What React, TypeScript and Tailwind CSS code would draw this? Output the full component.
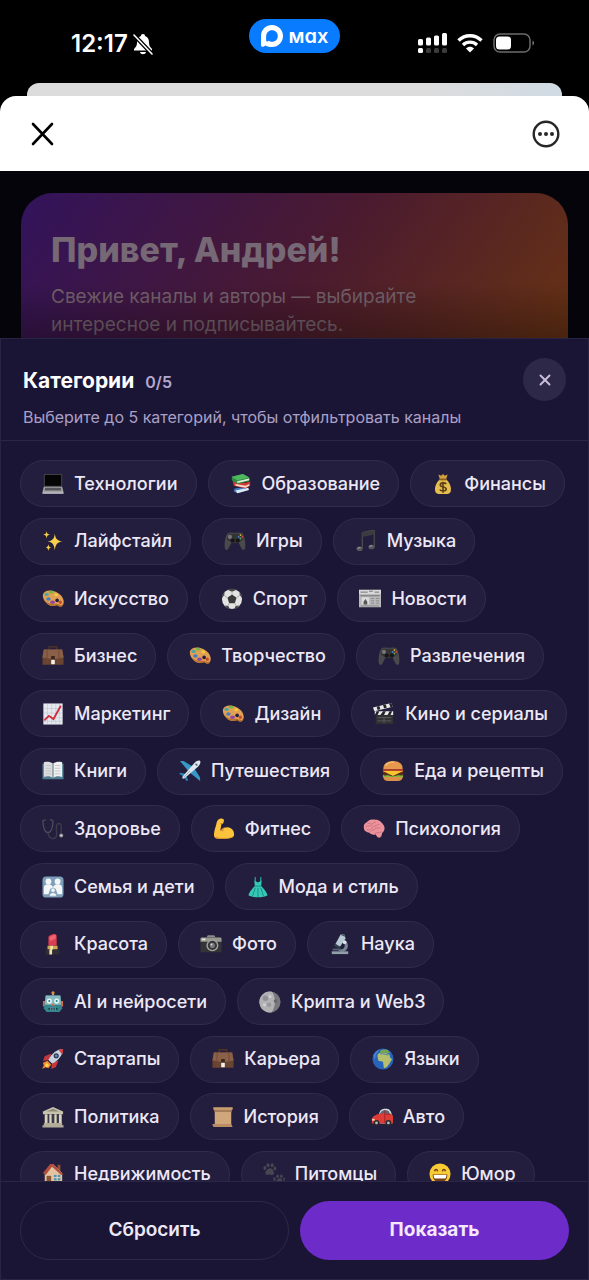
import type { ReactNode } from "react";
import { X } from "lucide-react";

const icons: Record<string, ReactNode> = {
    laptop: (
        <>
            <rect x="2" y="1" width="20" height="14" rx="1" fill="#4b4b50" />
            <rect x="3" y="2" width="18" height="12" fill="#050506" />
            <path d="M2 15h20l1.500 6H.5z" fill="#a3a3a6" />
            <path d="M3.500 16h17l.7 3H2.800z" fill="#56565a" />
            <path d="M.5 21h23v1.600H.5z" fill="#d9d9da" />
        </>
    ),
    books: (
        <>
            <path d="m5 17 13-2 3 3.500-13 3.500-4-2z" fill="#3c78c4" />
            <path d="m6 19 14-3 .5 2.500L8 22z" fill="#dfe9f2" />
            <path d="m3 9 14 2 5-2v5l-5 3-13-3z" fill="#d23830" />
            <path d="m6 12 11 2 4-2v2l-4 2-11-2z" fill="#f3d9cd" />
            <path d="m2 4 12-3 7 4v4l-13 3-6-4z" fill="#2f8f45" />
            <path d="m2 4 12-3 7 4-13 3z" fill="#4fb85e" />
            <path d="m8 9 13-3v2L8 11z" fill="#e4efdc" />
        </>
    ),
    money: (
        <>
            <path d="M7 1.500 10 3l2-2 2 2 3-1.500-1.500 5h-7z" fill="#d3a23c" />
            <path d="M8.500 7C5 10 2.500 15 3.500 19.500 4 22.500 7 23 12 23s8-.5 8.500-3.500C21.500 15 19 10 15.500 7z" fill="#e6bd4f" />
            <path d="M8 6h8v2H8z" fill="#8a6120" />
            <path d="M15.500 12c-1-1.500-6.500-2-6.500 1s6.500 1.500 6.500 4.500-6 2.500-7 .5M12 9.500v12" fill="none" stroke="#5b4017" strokeWidth="1.800" />
        </>
    ),
    sparkles: (
        <g fill="#f8cf4b">
            <path d="M14 4c1 6 2.500 7.500 8.500 8.500C16.500 13.500 15 15 14 22c-1-7-2.500-8.500-8-9.500 5.500-1 7-2.500 8-8.500z" />
            <path d="M5 1c.5 3 1.200 3.500 4 4-2.800.5-3.500 1.200-4 4.500C4.500 6.200 3.800 5.500 1 5c2.800-.5 3.500-1 4-4zM7 15.500c.4 2.300 1 3 3 3.500-2 .4-2.600 1-3 4-.4-3-1-3.600-3-4 2-.5 2.600-1.200 3-3.500z" />
        </g>
    ),
    gamepad: (
        <>
            <path d="M4 3.500C6 2 9 3 12 3s6-1 8 .5c2.500 3 4 11 3 16.500-.6 2.500-3 2-4 0l-3-6H8l-3 6c-1 2-3.400 2.500-4 0C0 14.500 1.500 6.500 4 3.500z" fill="#4a4a4c" />
            <path d="M5 4h14l2 6-5 4H8l-5-4z" fill="#343437" />
            <circle cx="6.500" cy="7.500" r="2.200" fill="#77777a" />
            <circle cx="9.500" cy="11.500" r="2.200" fill="#161618" />
            <circle cx="15" cy="11.500" r="2.200" fill="#161618" />
            <circle cx="18" cy="5.500" r="1" fill="#e5bf38" />
            <circle cx="20" cy="7.500" r="1" fill="#d04a39" />
            <circle cx="16" cy="7.500" r="1" fill="#4a83c9" />
            <circle cx="18" cy="9.300" r="1" fill="#59a658" />
        </>
    ),
    note: (
        <>
            <path d="m8 3 13-3v18.500M8 19.500V3" fill="none" stroke="#48484d" strokeWidth="1.500" />
            <path d="m8 3 13-2.500V5L8 7.500z" fill="#3a3a3f" />
            <ellipse cx="5" cy="20.500" rx="3.400" ry="2.500" fill="#55555b" />
            <ellipse cx="18" cy="18.500" rx="3.400" ry="2.500" fill="#55555b" />
            <path d="M3 20.500c.5-1.200 2-1.600 3-1.200M16 18.500c.5-1.200 2-1.600 3-1.200" fill="none" stroke="#b5b5ba" />
        </>
    ),
    palette: (
        <>
            <path d="M1 7c1.500-5 9-5.500 15-2.500 5.500 2.700 8.500 8 7.500 12-.8 3.500-3 4.500-5.500 3-2-1-3-.5-4.500 0C8 21 0 14 1 7z" fill="#e2a052" />
            <path d="M2 12c2 5 7 8 11.500 7.500 1.500-.5 2.500-1 4.500 0 2.500 1.500 4.700.5 5.500-3-1 2-3 2.500-5 1.500s-3-1-5-.5C9.500 18.500 5 16 2 12z" fill="#b56f2c" />
            <ellipse cx="5" cy="7" rx="2.400" ry="1.800" fill="#4ca7a5" />
            <ellipse cx="10" cy="4.500" rx="2.500" ry="1.600" fill="#6cba45" />
            <ellipse cx="15.500" cy="7.500" rx="2" ry="1.500" fill="#f5ce3d" />
            <ellipse cx="7" cy="12" rx="2.400" ry="2" fill="#3f7fc9" />
            <ellipse cx="11.500" cy="15.500" rx="2.600" ry="2" fill="#8d47a5" />
            <ellipse cx="20" cy="15.500" rx="1.700" ry="2" fill="#c64831" />
            <circle cx="16.500" cy="13.500" r="2" fill="#241e3e" />
        </>
    ),
    ball: (
        <>
            <circle cx="12" cy="12" r="11" fill="#e3e3e3" />
            <path d="m12 7 5 3.500-2 6H9l-2-6z" fill="#3a3a3c" />
            <path d="m7 2 5 2 5-2c-2-1.300-7.500-1.500-10 0zM1 11l2.500-3L4 4.500C2 6 .8 8.500 1 11zM23 11l-2.500-3-.5-3.500c2 1.500 3.200 4 3 6.500zM4 19l4 .5 1.500 3.200C7 22.300 5 21 4 19zM20 19l-4 .5-1.500 3.200C17 22.300 19 21 20 19z" fill="#48484a" />
            <path d="M12 7V4M17 10.500l3.500-2.500M15 16.500l1.500 3M9 16.500l-1.500 3M7 10.500 3.500 8" stroke="#a6a6a6" />
        </>
    ),
    newspaper: (
        <>
            <path d="M0 2h24v19H0z" fill="#b9b9ba" />
            <path d="M0 2h24v4.500H0z" fill="#d9d9da" />
            <path d="M1.500 4.500h8M11 3.500h4M17 4.500h5M1.500 8.500h21" stroke="#6c6c6f" />
            <path d="M3 10h8v8H3z" fill="#dadada" />
            <path d="M5 18v-3l2-3 2 3v3z" fill="#555558" />
            <path d="M13 11.500h3.500M13 14h3.500M13 16.500h3.500M18.500 11.500H22M18.500 14H22M18.500 16.500H22M2 19.500h20" stroke="#88888b" />
        </>
    ),
    briefcase: (
        <>
            <path d="M8 5V2h8v3" fill="none" stroke="#4e3224" strokeWidth="1.700" />
            <path d="M2 5h20l1.500 8v8.500H.5V13z" fill="#684431" />
            <path d="M2 5h20l1.500 8.500-11 2-12-2z" fill="#8b6049" />
            <path d="M5.500 5v16M18.500 5v16" stroke="#6f4936" />
            <rect x="10" y="12" width="4" height="4" fill="#3d271c" />
            <rect x="10" y="16" width="4" height="5" rx=".5" fill="#f2efe9" />
        </>
    ),
    chart: (
        <>
            <path d="M1.500.5h21v23h-21z" fill="#e6eaf0" />
            <path d="M6 1v22M10.500 1v22M15 1v22M19 1v22M2 6h20M2 11h20M2 16h20M2 20h20" stroke="#bdc7d3" strokeWidth=".7" />
            <path d="m2.500 19 5-5 5 3.500L20.500 3" fill="none" stroke="#cf2f3d" strokeWidth="2" />
        </>
    ),
    clapper: (
        <>
            <path d="M3 12h19v11H3z" fill="#313134" />
            <path d="M2 9h20v4H2z" fill="#eeeeef" />
            <path d="m4 9 3 0-2 4H2zM11 9h3l-2 4H8zM18 9h3l-2 4h-3z" fill="#242427" />
            <path d="m0 5 20-5 1.500 4-20 5z" fill="#e9e9ea" />
            <path d="m4 4 3-.8 1 3.600-3 .8zM11 2.200l3-.7 1 3.600-3 .7zM17.500.6 20 0l1.500 4-2.500.6z" fill="#242427" />
            <path d="M5 16h15M5 19.500h15M12 16v6" stroke="#5c5c60" />
        </>
    ),
    book: (
        <>
            <path d="M.5 4h23v17H.5z" fill="#4d7e91" />
            <path d="M2 2.500c4-1 7-.5 10 1.500v15.500c-3-2-6-2.300-10-1z" fill="#dcdedf" />
            <path d="M22 2.500c-4-1-7-.5-10 1.500v15.500c3-2 6-2.300 10-1z" fill="#eff0f0" />
            <path d="M12 4v15.500" stroke="#778188" strokeWidth="1.300" />
            <path d="M4 6h6M4 9h6M4 12h6M4 15h6M14 6h6M14 9h6M14 12h6M14 15h6" stroke="#b5babd" strokeWidth=".8" />
        </>
    ),
    plane: (
        <>
            <path d="m1 1 4 0 11 7-5 5zM23 23v-4L16 8l-5 5z" fill="#3698c7" />
            <path d="m2 14 5 1 3 7-2 1-3-5-5-3z" fill="#2686b6" />
            <path d="M4 18 17 3c2-2 5-3 6-2s0 4-2 6L6 20c-2 1-3 0-2-2z" fill="#dde6ec" />
            <path d="m18 4 2 2" stroke="#4b6475" strokeWidth="1.500" />
            <path d="m5 19 7-7" stroke="#95aab7" />
        </>
    ),
    burger: (
        <>
            <path d="M1.500 10C1 4 6 1 12 1s11 3 10.500 9z" fill="#e6984d" />
            <path d="M4 6c2-3 6-4 9-3.500" stroke="#f7bc79" strokeWidth="1.600" fill="none" />
            <path d="M1 10h22v3H1z" fill="#b9422c" />
            <path d="M1 13h22v4H1z" fill="#5b2d1d" />
            <path d="M1 12h22l-6 3-5 2.500L7 15z" fill="#f7c52e" />
            <path d="M1 16c3 2 5 0 7 1s5 1 8 0 5 1 7-1v3H1z" fill="#83b839" />
            <path d="M1.500 18.500h21c0 3-2.500 4.500-5 4.500h-11c-3 0-5-1.500-5-4.500z" fill="#dc9049" />
        </>
    ),
    stethoscope: (
        <>
            <path d="M4 2 1 3c0 7 2 13 5.500 13S12 10 12 3L9 1.500" fill="none" stroke="#50505a" strokeWidth="1.300" />
            <path d="M6.500 16c1 8 10 9 9.500 1-.5-6-1-11 2.500-11 4 0 2 6 2.500 11" fill="none" stroke="#3d3b49" strokeWidth="1.500" />
            <circle cx="21" cy="19" r="2.200" fill="#8c8c92" />
            <circle cx="21" cy="19" r="1" fill="#d6d6d8" />
        </>
    ),
    biceps: (
        <>
            <path d="M7 1c3-1 5 0 5 2l-1 3-2 1c0 3-1 5-1 7 3-4 8-5 11-3 3 1.500 4 4 4 7 0 3-3 4-6 4-5 1-10 1-14 0-3-1-2-7 0-13C4 6 4 2 7 1z" fill="#fcc33c" />
            <path d="M2.500 20c5 3 14 3 20 0-1 2-3 2-6 2.500-5 .8-10 .7-13-.2zM8 14c1-2 3-3.500 5-4-1 1.500-2 3-2 5" fill="#de922b" />
            <path d="M8 6h3" stroke="#cf8422" />
        </>
    ),
    brain: (
        <>
            <path d="M1 11C0 6 4 5 6 3c3-2 6-1 8-1 4 0 6 3 8 5 3 4 1 8-1 9l-1 4c-1 2-4 2-5 0l-1-2c-4 1-6-1-7-2-3 0-6-2-6-5z" fill="#eb929b" />
            <path d="M3 10c2-3 4 0 6-2s2-4 5-3M8 15c1-3 4-1 5-3s4-1 6-1M10 12c-1-2 1-3 3-3s2-3 5-2M4 13c2-1 3 1 4-1M13 17c2-2 4 0 7-2M5 6c2-1 3 1 4 0" fill="none" stroke="#c8727f" strokeWidth="1" />
        </>
    ),
    family: (
        <>
            <rect x=".5" y=".5" width="23" height="23" rx="4" fill="#7d9eb9" />
            <g fill="#f3f6f8">
                <circle cx="7" cy="6" r="3.200" />
                <circle cx="17" cy="6" r="3.200" />
                <path d="M2 20v-7c0-3 2-4 5-4s5 2 5 4c0-2 2-4 5-4s5 1 5 4v7h-5l-2-6h-6l-2 6z" />
                <circle cx="12" cy="15.500" r="2.400" stroke="#7d9eb9" strokeWidth=".7" />
                <path d="M8 22c0-5 8-5 8 0z" stroke="#7d9eb9" strokeWidth=".7" />
            </g>
        </>
    ),
    dress: (
        <>
            <path d="M9 1v5M15 1v5" stroke="#289d91" strokeWidth="1.400" />
            <path d="M8 5l4 2 4-2-.5 6c3 3 6 7 7 10-5 3-16 3-21 0 1-3 4-7 7-10z" fill="#35c8b6" />
            <path d="M8.500 11h7M9 13l-3 9M12 13v10M15 13l3 9" stroke="#188c82" fill="none" />
        </>
    ),
    lipstick: (
        <>
            <path d="M7 14V4c3-3 8-4 9-1v11z" fill="#dc3c50" />
            <path d="M8 5c2-2 5-3 7-3v4l-6 3z" fill="#ef6470" />
            <path d="M6 14h11v4H6z" fill="#cfa94e" />
            <path d="M4 18h15v5.500H4z" fill="#302d34" />
            <path d="M9 14h3v4H9zM8 18h3v5.500H8z" fill="#eee0a7" />
        </>
    ),
    camera: (
        <>
            <path d="m7 5 1.500-2.500h7L17 5" fill="#8b8b8d" />
            <rect x=".5" y="5" width="23" height="16" rx="1.500" fill="#353537" />
            <path d="M.5 6.500Q.5 5 2 5h20q1.500 0 1.500 1.500v3H.5z" fill="#97978f" />
            <rect x="2" y="6" width="4" height="2" fill="#e2e2d9" />
            <circle cx="13.500" cy="13.500" r="6.500" fill="#a6a6a0" />
            <circle cx="13.500" cy="13.500" r="5" fill="#363639" />
            <circle cx="13.500" cy="13.500" r="2.800" fill="#78787d" />
            <circle cx="12.500" cy="12.500" r="1" fill="#ddd" />
        </>
    ),
    microscope: (
        <>
            <path d="M3 20h18v3H3z" fill="#92a0aa" />
            <path d="M9 18c7 1 10-3 7-8l3-1c4 6 0 12-6 12z" fill="#788995" />
            <path d="m13 1 4 1 1 4-6 9-5-3z" fill="#b6c8d2" />
            <path d="m13 1 4 1 .5 2-5-2z" fill="#40505d" />
            <path d="m7 12 5 3-1 2-6-3z" fill="#34444e" />
            <path d="M4 17h9v2H4z" fill="#536471" />
            <circle cx="17" cy="10" r="2" fill="#dbe4e9" />
        </>
    ),
    robot: (
        <>
            <path d="M12 5V2" stroke="#b6c2c5" strokeWidth="2" />
            <circle cx="12" cy="2" r="1.800" fill="#d78e42" />
            <path d="M1 11h3v6H1zM20 11h3v6h-3z" fill="#d66c4b" />
            <path d="M4 5h16l2 14-3 4H5l-3-4z" fill="#34858e" />
            <path d="M4 5h16l1 10H3z" fill="#86babe" />
            <circle cx="8" cy="11" r="2.800" fill="#e3f5f4" />
            <circle cx="16" cy="11" r="2.800" fill="#e3f5f4" />
            <circle cx="8" cy="11" r="1.100" fill="#247d91" />
            <circle cx="16" cy="11" r="1.100" fill="#247d91" />
            <path d="M11 14h2l1 2h-4z" fill="#cc6d50" />
            <path d="M7 18.500h10v2H7z" fill="#153e48" />
            <path d="M9.500 18v3M12 18v3M14.500 18v3" stroke="#9cc1c2" strokeWidth=".8" />
        </>
    ),
    moon: (
        <>
            <circle cx="12" cy="12" r="11.500" fill="#77777c" />
            <path d="M14 .7C18 5 19 16 14 23.300A11.500 11.500 0 1 1 14 .7z" fill="#b2b2b5" />
            <circle cx="7" cy="8" r="3" fill="#929296" />
            <circle cx="11" cy="15" r="2.500" fill="#99999d" />
            <circle cx="12" cy="6" r="1.700" fill="#d0d0d2" />
            <circle cx="6" cy="15" r="1.700" fill="#d0d0d2" />
            <circle cx="18" cy="11" r="2" fill="#65656b" />
        </>
    ),
    rocket: (
        <>
            <path d="M10 6 3 9l-2 5 7-1zM18 14l-3 7-5 2 1-7z" fill="#c4373a" />
            <path d="m6 14 4 4-3 4-3-1-4 2 2-4-1-3z" fill="#f28931" />
            <path d="m5 16 3 3-3 2-2-2z" fill="#ffd752" />
            <path d="M7 13C10 6 17 1 23 1c0 6-5 13-12 16z" fill="#c9d2de" />
            <path d="M18 2c2-1 4-1 5-1 0 2 0 4-1 6z" fill="#cd4341" />
            <circle cx="15.500" cy="8.500" r="2.800" fill="#2a3746" />
            <circle cx="15.500" cy="8.500" r="1.500" fill="#608bb4" />
        </>
    ),
    globe: (
        <>
            <circle cx="12" cy="12" r="11.500" fill="#2765bd" />
            <path d="M6 9c0-4 5-5 8-4l5 2 1 4 2 1-3 5-3 4-3 1-1-7-5-1z" fill="#b5bf6c" />
            <path d="M9 3c3-2 7-2 9 0l2 3-6-1-5 1z" fill="#78a552" />
            <path d="M1.500 8C3 5 5 3 8 1.500L4 8l-1 5z" fill="#5c9fda" opacity=".6" />
            <path d="M9 6.500c3-1 6 1 9 1" stroke="#387cbd" fill="none" />
        </>
    ),
    temple: (
        <>
            <path d="M12 1 1 6v3h22V6z" fill="#c6c2ae" />
            <path d="m12 3-7 3h14z" fill="#8d8977" />
            <path d="M3 9h18v10H3z" fill="#3b3948" />
            <path d="M3 9h3v10H3zM8 9h2.500v10H8zM13.500 9H16v10h-2.500zM18.500 9h3v10h-3z" fill="#d8d3bd" />
            <path d="M2 18.500h20V21H2zM.5 21h23v2.500H.5z" fill="#b2ad99" />
        </>
    ),
    scroll: (
        <>
            <path d="M1.500 1.500h21L21 7H3z" fill="#9e7751" />
            <path d="M3 4h18v17H3z" fill="#d0a77a" />
            <path d="M.5 19.500h20.500l1.500 3.500H3c-2 0-2.500-2-2.500-3.500z" fill="#b98c61" />
            <path d="M1.500 1.500h21V4h-21z" fill="#c99f72" />
            <path d="M3 5.500h18" stroke="#765136" />
        </>
    ),
    car: (
        <>
            <path d="M9 8c1-4 3-5 7-5 4 0 5 1 7 7v9H10z" fill="#d9dce1" />
            <path d="M10 8c1-3 3-3.500 6-3.500 2 0 4 .5 5 5H9z" fill="#556878" />
            <path d="M1 14c1-4 8-6 14-6 5 0 9 1 9 4v7H1z" fill="#dd3c37" />
            <path d="M15 4.500v14M16 9h6" stroke="#a12427" />
            <circle cx="6" cy="18.500" r="3.200" fill="#28282c" />
            <circle cx="6" cy="18.500" r="1.500" fill="#b8bbc0" />
            <circle cx="19" cy="18.500" r="3.200" fill="#28282c" />
            <circle cx="19" cy="18.500" r="1.500" fill="#b8bbc0" />
            <path d="M1 14h3v2H1z" fill="#f5d1ac" />
        </>
    ),
    house: (
        <>
            <path d="M17 2h3v7h-3z" fill="#9b4d3c" />
            <path d="m3 10 9-9 10 10v12H3z" fill="#e3c3a0" />
            <path d="m1 11 8-10h3l11 11-2 1-10-9-7 9z" fill="#b14e3d" />
            <path d="M5 14h5v9H5z" fill="#8d5336" />
            <path d="M13 13h7v6h-7z" fill="#5294a7" />
            <path d="M16.500 13v6M13 16h7" stroke="#efe1d2" />
            <path d="M11 20h12v3H11z" fill="#5e9144" />
        </>
    ),
    paws: (
        <g fill="#4a4650">
            <path d="M4 8c2-3 6-3 7 0 1 2 2 5-1 5-2 0-3-1-5 0-3 0-3-3-1-5z" />
            <ellipse cx="2" cy="5.500" rx="1.600" ry="2.100" />
            <ellipse cx="5.500" cy="2.500" rx="1.600" ry="2.200" />
            <ellipse cx="10" cy="2.500" rx="1.600" ry="2.200" />
            <ellipse cx="13" cy="6" rx="1.500" ry="2.100" />
            <path d="M15 19c2-3 5-3 6 0 1 2 2 4-1 4h-4c-3 0-3-2-1-4z" />
            <ellipse cx="12.500" cy="17.500" rx="1.400" ry="1.900" />
            <ellipse cx="16" cy="14.500" rx="1.400" ry="1.900" />
            <ellipse cx="20" cy="14.500" rx="1.400" ry="1.900" />
            <ellipse cx="23" cy="17.500" rx="1" ry="1.800" />
        </g>
    ),
    smile: (
        <>
            <circle cx="12" cy="12" r="11.500" fill="#f9cb35" />
            <path d="M6 9c.8-2.500 2.700-2.500 3.500 0M14.500 9c.8-2.500 2.700-2.500 3.500 0" fill="none" stroke="#6d421b" strokeWidth="1.600" />
            <path d="M4 12.500h16c0 6-3.500 8.500-8 8.500s-8-2.500-8-8.500z" fill="#764018" />
            <path d="M5 13h14c0 2.500-1 4-2 4H7c-1 0-2-1.500-2-4z" fill="#fff" />
        </>
    ),
};

const categories = [
    ["laptop", "Технологии"],
    ["books", "Образование"],
    ["money", "Финансы"],
    ["sparkles", "Лайфстайл"],
    ["gamepad", "Игры"],
    ["note", "Музыка"],
    ["palette", "Искусство"],
    ["ball", "Спорт"],
    ["newspaper", "Новости"],
    ["briefcase", "Бизнес"],
    ["palette", "Творчество"],
    ["gamepad", "Развлечения"],
    ["chart", "Маркетинг"],
    ["palette", "Дизайн"],
    ["clapper", "Кино и сериалы"],
    ["book", "Книги"],
    ["plane", "Путешествия"],
    ["burger", "Еда и рецепты"],
    ["stethoscope", "Здоровье"],
    ["biceps", "Фитнес"],
    ["brain", "Психология"],
    ["family", "Семья и дети"],
    ["dress", "Мода и стиль"],
    ["lipstick", "Красота"],
    ["camera", "Фото"],
    ["microscope", "Наука"],
    ["robot", "AI и нейросети"],
    ["moon", "Крипта и Web3"],
    ["rocket", "Стартапы"],
    ["briefcase", "Карьера"],
    ["globe", "Языки"],
    ["temple", "Политика"],
    ["scroll", "История"],
    ["car", "Авто"],
    ["house", "Недвижимость"],
    ["paws", "Питомцы"],
    ["smile", "Юмор"],
];

function StatusBar() {
    return (
        <div className="flex h-[83px] shrink-0 items-start justify-between pl-[71px] pr-[54px] text-white">
            <div className="flex w-[101px] items-center gap-1 pt-[30px]">
                <span className="text-2xl font-semibold leading-7">12:17</span>
                <svg className="size-[22px]" viewBox="0 0 22 22">
                    <path d="M11 1c1.500 0 2 .8 2 2 3 1 4 3.500 4 6.500 0 3 1 4.500 3 6.500v1.500H2V16c2-2 3-3.500 3-6.500C5 6.500 6 4 9 3c0-1.200.5-2 2-2zM8 19h6c-.5 3-5.500 3-6 0z" fill="#fff" />
                    <path d="m2 2 18 19" stroke="#000" strokeWidth="4" />
                    <path d="m2 2 18 19" stroke="#fff" strokeWidth="1.600" strokeLinecap="round" />
                </svg>
            </div>

            <div className="mt-[19px] flex h-[34px] w-[91px] items-center justify-center gap-1.5 rounded-full bg-[#087bff]">
                <svg className="size-[22px]" viewBox="0 0 22 22">
                    <path d="M11 0C5 0 0 4.500 0 11v9c0 2 2 2.500 4.500.5 2 1 4 1.500 6.500 1.500 6.500 0 11-5 11-11S17.500 0 11 0zm0 5.200c3.500 0 5.800 2.500 5.800 5.800S14.500 16.800 11 16.800c-1.500 0-2.500-.5-3.300-1-.8.800-1.700 1-2 .8-.7-1-.7-3.600-.5-5.600.2-3.300 2.500-5.800 5.800-5.800z" fill="#fff" fillRule="evenodd" />
                </svg>
                <span className="text-xl font-semibold leading-6 [font-feature-settings:'cv11']">мах</span>
            </div>

            <svg className="mt-8 h-[22px] w-[118px]" viewBox="0 0 118 22">
                <g fill="#fff">
                    <rect x="1" y="7" width="5" height="6.500" rx="1.500" />
                    <rect x="9" y="5.500" width="5" height="8" rx="1.500" />
                    <rect x="17" y="3.500" width="5" height="10" rx="1.500" />
                    <rect x="25" y="1" width="5" height="12.500" rx="1.500" />
                    <rect x="1" y="16" width="5" height="5" rx="1.500" />
                </g>
                <g fill="#3b3b3b">
                    <rect x="9" y="16" width="5" height="5" rx="1.500" />
                    <rect x="17" y="16" width="5" height="5" rx="1.500" />
                    <rect x="25" y="16" width="5" height="5" rx="1.500" />
                </g>
                <g fill="none" stroke="#fff" strokeWidth="3.400">
                    <path d="M41.500 8.500c6.500-6.300 16.500-6.300 23 0" />
                    <path d="M46 13c4-3.800 10-3.800 14 0" />
                </g>
                <path d="M49 16.500c2.200-2.200 5.800-2.200 8 0l-4 4z" fill="#fff" />
                <rect x="77" y="2" width="36" height="18" rx="6" fill="none" stroke="#6b6b6b" strokeWidth="1.500" />
                <rect x="79" y="4.500" width="15" height="13" rx="3.500" fill="#fff" />
                <path d="M115.500 8.500c2 .7 2 4.300 0 5z" fill="#777" />
            </svg>
        </div>
    );
}

function Hero() {
    return (
        <section className="h-[167px] shrink-0 overflow-hidden bg-[#05040a] px-[21px] pt-[22px]">
            <div className="relative h-[200px] rounded-t-[32px] bg-linear-[125deg] from-[#32135c] via-[#4a1a30] via-50% to-[#6b3510] px-[30px] pt-9">
                <div className="absolute inset-x-0 top-[90px] h-14 bg-linear-to-b from-transparent to-black/30" />
                <h1 className="text-[34px] font-extrabold leading-[42px] text-[#766874]">Привет, Андрей!</h1>
                <p className="mt-3 text-[19px] leading-7 text-[#74616c]">
                    Свежие каналы и авторы — выбирайте
                    <br />
                    интересное и подписывайтесь.
                </p>
            </div>
        </section>
    );
}

function Chip({ icon, label }: { icon: string; label: string }) {
    return (
        <button
            type="button"
            className="flex h-[47px] items-center gap-[10px] whitespace-nowrap rounded-full border border-[#322c4c] bg-[#241e3e] pl-[21px] pr-[18px] text-lg font-medium text-[#ece8f6]"
        >
            <svg className="size-[22px] shrink-0" viewBox="0 0 24 24" aria-hidden="true">
                {icons[icon]}
            </svg>
            {label}
        </button>
    );
}

export default function App() {
    return (
        <div className="flex h-screen flex-col overflow-hidden bg-black font-['Inter','Noto_Sans',sans-serif]">
            <StatusBar />

            {/* Mini app window bar with the edge of the screen behind it */}
            <div className="mx-[27px] h-[13px] shrink-0 rounded-t-[12px] bg-linear-to-r from-[#dcdcdc] from-75% to-[#d0dbe4]" />
            <header className="flex h-[75px] shrink-0 items-center justify-between rounded-t-[16px] bg-white px-[29px]">
                <button type="button" aria-label="Закрыть" className="text-black">
                    <svg className="size-7" viewBox="0 0 28 28" fill="none" stroke="currentColor" strokeWidth="2.600" strokeLinecap="round">
                        <path d="m4 4 19 20M23 4 4 24" />
                    </svg>
                </button>
                <button type="button" aria-label="Меню" className="text-[#262628]">
                    <svg className="size-7" viewBox="0 0 28 28">
                        <circle cx="14" cy="14" r="12.300" fill="none" stroke="currentColor" strokeWidth="2.400" />
                        <circle cx="8" cy="14" r="2" fill="currentColor" />
                        <circle cx="14" cy="14" r="2" fill="currentColor" />
                        <circle cx="20" cy="14" r="2" fill="currentColor" />
                    </svg>
                </button>
            </header>

            <Hero />

            {/* Bottom sheet */}
            <main className="flex min-h-0 flex-1 flex-col border border-[#292344] bg-[#1b1535]">
                <div className="flex shrink-0 items-start justify-between border-b border-[#2b2546] pb-[11px] pl-[22px] pr-[22px] pt-[19px]">
                    <div>
                        <h2 className="flex items-baseline gap-[11px] pt-[9px] text-[21px] font-bold leading-7 text-white">
                            Категории
                            <span className="text-base font-semibold text-[#b3a8cf]">0/5</span>
                        </h2>
                        <p className="mt-[10px] text-base leading-6 text-[#aaa0c6]">Выберите до 5 категорий, чтобы отфильтровать каналы</p>
                    </div>
                    <button type="button" aria-label="Закрыть категории" className="flex size-[43px] items-center justify-center rounded-full bg-[#2e2848] text-[#c8c0dc]">
                        <X size={18} strokeWidth={2.5} />
                    </button>
                </div>

                {/* The last row runs under the footer */}
                <div className="flex min-h-0 flex-1 flex-col overflow-hidden px-[19px] pt-[19px]">
                    <div className="-mb-[17px] flex flex-1 flex-wrap content-between items-start gap-x-[11px]">
                        {categories.map(([icon, label]) => (
                            <Chip key={label} icon={icon} label={label} />
                        ))}
                    </div>
                </div>

                <footer className="relative grid shrink-0 grid-cols-2 gap-[11px] border-t border-[#2b2546] bg-[#1b1535] px-[19px] py-[19px]">
                    <button type="button" className="h-[59px] rounded-full border border-[#2f2949] text-[19px] font-semibold text-[#ece8f6]">
                        Сбросить
                    </button>
                    <button type="button" className="h-[59px] rounded-full bg-[#6d2bc9] text-[19px] font-bold text-[#f6e8ff]">
                        Показать
                    </button>
                </footer>
            </main>
        </div>
    );
}
